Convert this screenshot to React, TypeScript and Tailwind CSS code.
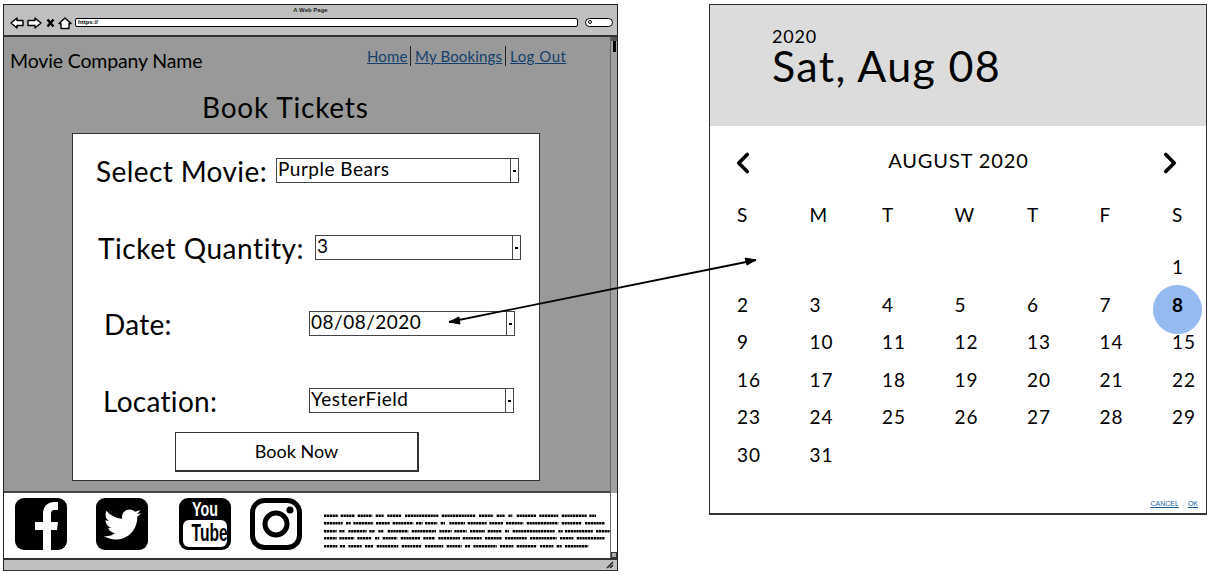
import { FaTwitter } from "react-icons/fa";
import { ChevronLeft, ChevronRight } from "lucide-react";

const greek = [
  "M42 0H85M92 0H135M143 0H187M197 0H222M232 0H275M285 0H385M395 0H497M507 0H550M560 0H585M595 0H607M620 0H678M688 0H745M755 0H830M838 0H858",
  "M42 23H98M108 23H122M130 23H190M198 23H240M248 23H310M318 23H338M345 23H382M392 23H405M418 23H465M473 23H530M538 23H580M588 23H640M650 23H745M755 23H815M825 23H885",
  "M42 47H80M88 47H105M115 47H170M178 47H195M205 47H220M233 47H295M305 47H378M388 47H425M433 47H470M480 47H525M533 47H575M585 47H597M608 47H735M745 47H758M765 47H850M858 47H900",
  "M42 68H80M88 68H133M142 68H185M195 68H208M218 68H262M272 68H330M340 68H375M385 68H450M458 68H515M525 68H575M585 68H650M660 68H740M750 68H790M800 68H885",
  "M42 92H82M90 92H105M115 92H155M165 92H190M200 92H265M275 92H335M345 92H400M410 92H455M465 92H480M490 92H560M570 92H610M620 92H680M690 92H730M740 92H755M765 92H835",
];

const days: (number | null)[] = [
  null, null, null, null, null, null, 1,
  2, 3, 4, 5, 6, 7, 8,
  9, 10, 11, 12, 13, 14, 15,
  16, 17, 18, 19, 20, 21, 22,
  23, 24, 25, 26, 27, 28, 29,
  30, 31,
];

function SelectBox({ value, className }: { value: string; className: string }) {
  return (
    <div className={`flex h-[25px] bg-white border border-[#444] ${className}`}>
      <div className="flex-1 pl-[1px] text-[19px] leading-[20px] tracking-[0.5px] text-black">{value}</div>
      <div className="w-[8px] border-l border-[#444] flex items-center justify-center">
        <div className="w-[3px] h-[2px] bg-black" />
      </div>
    </div>
  );
}

function BrowserBar() {
  return (
    <div className="h-[32px] bg-[#c0c0c0] border-b-2 border-[#333] flex flex-col">
      <div className="h-[12px] text-center text-[6px] leading-[10px] font-bold text-[#222] font-['Liberation_Sans',sans-serif]">A Web Page</div>
      <div className="flex items-center pl-[6px] h-[11px]">
        <svg width="66" height="14" viewBox="0 0 66 14" className="shrink-0">
          <path d="M1 7L7 2V4.5H13V9.5H7V12Z" fill="#fff" stroke="#000" strokeWidth="1.4" strokeLinejoin="round" />
          <path d="M31 7L25 2V4.5H18V9.5H25V12Z" fill="#fff" stroke="#000" strokeWidth="1.4" strokeLinejoin="round" />
          <path d="M37.500 3.500L43.500 10.500M43.500 3.500L37.500 10.500" stroke="#000" strokeWidth="2.400" />
          <path d="M49 7.500L55 2L61 7.500H59V12.500H51V7.500Z" fill="#fff" stroke="#000" strokeWidth="1.400" strokeLinejoin="round" />
        </svg>
        <div className="ml-[-1px] w-[503px] h-[9px] bg-white border border-black rounded-[2px] text-[6px] leading-[7px] font-bold pl-[2px] font-['Liberation_Sans',sans-serif]">https://</div>
        <div className="ml-[7px] w-[28px] h-[9px] bg-white border border-black rounded-full relative">
          <div className="absolute left-[2px] top-[1px] w-[4px] h-[4px] border border-black rounded-full" />
        </div>
      </div>
    </div>
  );
}

function SiteHeader() {
  return (
    <div className="flex h-[55px] pl-[6px]">
      <div className="w-[357px] pt-[10px] text-[19.5px] leading-[28px] tracking-[-0.15px] text-black whitespace-nowrap">Movie Company Name</div>
      <div className="pt-[9px] flex h-[31px] items-start text-[15px] tracking-[0.15px] text-[#123f6d] whitespace-nowrap">
        <span className="w-[44px] border-r border-[#222] h-[20px] leading-[20px]"><span className="underline">Home</span></span>
        <span className="w-[95px] pl-[4px] border-r border-[#222] h-[20px] leading-[20px]"><span className="underline">My Bookings</span></span>
        <span className="underline pl-[4px] h-[20px] leading-[20px] tracking-[0.5px]">Log Out</span>
      </div>
    </div>
  );
}

function BookingForm() {
  return (
    <div className="ml-[68px] w-[468px] h-[348px] bg-white border border-[#333] flex flex-col">
      <div className="h-[77px] pt-[24px] flex pl-[23px]">
        <div className="w-[180px] text-[28px] leading-[26px] tracking-[0.4px] text-black whitespace-nowrap">Select Movie:</div>
        <SelectBox value="Purple Bears" className="w-[243px]" />
      </div>
      <div className="h-[76px] pt-[24px] flex pl-[25px]">
        <div className="w-[217px] text-[28px] leading-[26px] tracking-[0.55px] text-black whitespace-nowrap">Ticket Quantity:</div>
        <SelectBox value="3" className="w-[206px]" />
      </div>
      <div className="h-[77px] pt-[24px] flex pl-[31px]">
        <div className="w-[205px] text-[28px] leading-[26px] tracking-[0.3px] text-black">Date:</div>
        <SelectBox value="08/08/2020" className="w-[206px]" />
      </div>
      <div className="h-[59px] pt-[24px] flex pl-[30px]">
        <div className="w-[206px] text-[28px] leading-[26px] tracking-[0.3px] text-black">Location:</div>
        <SelectBox value="YesterField" className="w-[205px]" />
      </div>
      <div className="mt-[9px] ml-[102px] w-[244px] h-[40px] bg-white border border-[#333] border-b-2 border-r-2 flex items-center justify-center text-[18px] text-black">
        Book Now
      </div>
    </div>
  );
}

function SocialIcons() {
  return (
    <div className="flex items-start pt-[5px] pl-[11px] h-full">
      <svg width="52" height="52" viewBox="0 0 52 52" className="shrink-0">
        <rect width="52" height="52" rx="9" fill="#000" />
        <path d="M28 52V32H20V24H28V16C28 8 33 4 40 4H43V12H39C37 12 36 13 36 16V24H43L42 32H36V52Z" fill="#fff" />
      </svg>
      <div className="ml-[29px] w-[52px] h-[52px] rounded-[9px] bg-black flex items-center justify-center shrink-0">
        <FaTwitter className="text-white w-[37px] h-[37px]" />
      </div>
      <div className="ml-[31px] w-[52px] h-[52px] rounded-[9px] bg-black flex flex-col items-center shrink-0 font-['Liberation_Sans',sans-serif] font-bold">
        <div className="h-[22px] text-white text-[21px] leading-[22px] scale-x-[0.68]">You</div>
        <div className="w-[44px] h-[27px] bg-white rounded-[6px] text-black text-[23px] leading-[27px] text-center whitespace-nowrap"><span className="inline-block scale-x-[0.68] origin-center">Tube</span></div>
      </div>
      <svg width="52" height="52" viewBox="0 0 52 52" className="ml-[19px] shrink-0">
        <rect x="2.500" y="2.500" width="47" height="47" rx="12" fill="#fff" stroke="#000" strokeWidth="5" />
        <circle cx="26" cy="26" r="11" fill="none" stroke="#000" strokeWidth="5" />
        <circle cx="40" cy="12" r="3.500" fill="#000" />
      </svg>
      <svg width="300" height="36" viewBox="0 0 900 108" className="ml-[8px] mt-[15px] shrink-0">
        {greek.map((d, i) => (
          <path key={i} d={d} transform="translate(0 8)" stroke="#000" strokeWidth="7.500" strokeDasharray="7 1.500" fill="none" />
        ))}
      </svg>
    </div>
  );
}

function BrowserWindow() {
  return (
    <div className="w-[615px] h-[567px] border-t border-l border-r border-[#222] flex flex-col shrink-0 shadow-[inset_0_-1px_0_#222]">
      <BrowserBar />
      <div className="h-[521px] flex">
        <div className="flex-1 flex flex-col min-w-0">
          <div className="h-[456px] bg-[#999999] border-b-2 border-[#444] flex flex-col">
            <SiteHeader />
            <div className="h-[41px] pl-[198px] text-[28px] leading-[30px] tracking-[0.8px] text-black">Book Tickets</div>
            <BookingForm />
          </div>
          <div className="flex-1 bg-white"><SocialIcons /></div>
        </div>
        <div className="w-[7px] flex flex-col border-l border-[#666]">
          <div className="h-[456px] bg-[#a2a2a2] flex flex-col items-center">
            <div className="w-full h-[4px] bg-[#555]" />
            <div className="w-[3px] h-[11px] bg-black" />
          </div>
          <div className="flex-1 bg-white flex flex-col justify-end">
            <div className="h-[6px] bg-[#aaa] border border-[#333]" />
          </div>
        </div>
      </div>
      <div className="flex-1 bg-[#c0c0c0] border-t-2 border-b border-[#333] flex justify-end items-center pr-[3px]">
        <svg width="8" height="8" viewBox="0 0 8 8"><path d="M1 7L7 1M4 7L7 4" stroke="#222" strokeWidth="1.500" /></svg>
      </div>
    </div>
  );
}

function CalendarPicker() {
  return (
    <div className="ml-[91px] w-[498px] h-[511px] border border-[#333] border-b-2 bg-white flex flex-col shrink-0">
      <div className="h-[121px] bg-[#dcdcdc] pl-[62px] pt-[22px] text-black">
        <div className="text-[18px] leading-[18px] tracking-[0.8px]">2020</div>
        <div className="text-[43px] leading-[41px] tracking-[1.3px]">Sat, Aug 08</div>
      </div>
      <div className="h-[75px] flex items-center justify-between pl-[16px] pr-[19px] pb-[2px]">
        <ChevronLeft size={34} strokeWidth={2.6} className="text-black" />
        <div className="text-[20px] tracking-[0.9px] text-black ml-[4px] mb-[6px]">AUGUST 2020</div>
        <ChevronRight size={34} strokeWidth={2.6} className="text-black" />
      </div>
      <div className="grid grid-cols-[repeat(7,72.5px)] pl-[27px] h-[33px] text-[19px] leading-[28px] tracking-[0.5px] text-black">
        {["S", "M", "T", "W", "T", "F", "S"].map((d, i) => (
          <div key={i}>{d}</div>
        ))}
      </div>
      <div className="grid grid-cols-[repeat(7,72.5px)] auto-rows-[37.500px] pl-[27px] pt-[14px] text-[19px] leading-[37px] tracking-[1px] text-black">
        {days.map((d, i) => (
          <div key={i} className="relative">
            {d === 8 && <div className="absolute left-[-19px] top-[-1px] w-[49px] h-[49px] rounded-full bg-[#94baf0]" />}
            <span className={d === 8 ? "relative font-bold" : "relative"}>{d}</span>
          </div>
        ))}
      </div>
      <div className="mt-auto h-[14px] flex justify-end gap-[9px] pr-[8px] text-[7px] leading-[10px] underline text-[#1b5c9e] font-['Liberation_Sans',sans-serif]">
        <span>CANCEL</span>
        <span>OK</span>
      </div>
    </div>
  );
}

export default function App() {
  return (
    <div className="relative w-[1214px] h-[574px] bg-white overflow-hidden flex pl-[3px] pt-[4px] font-['Lato',sans-serif]">
      <BrowserWindow />
      <CalendarPicker />
      <svg width="1214" height="574" className="absolute inset-0 pointer-events-none">
        <path d="M756 260L449 322" stroke="#000" strokeWidth="1.800" />
        <path d="M756 260L745 258L747 265Z" fill="#000" stroke="#000" />
        <path d="M449 322L459 317L460 324Z" fill="#000" stroke="#000" />
      </svg>
    </div>
  );
}
